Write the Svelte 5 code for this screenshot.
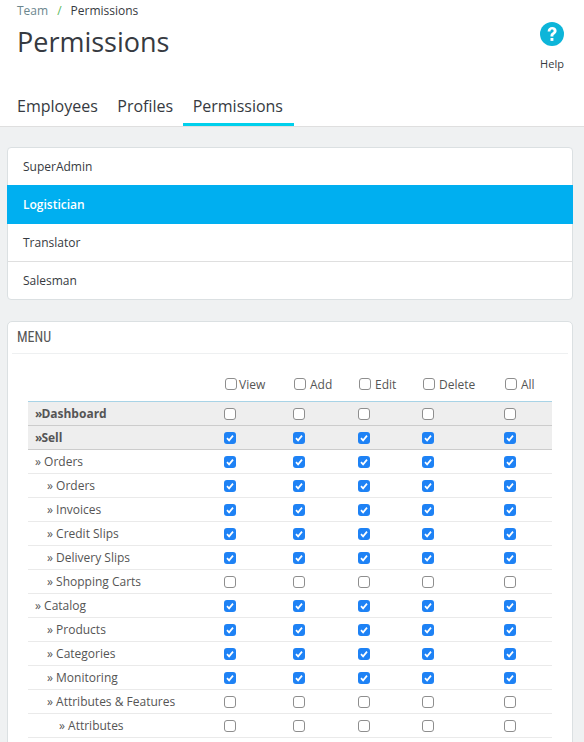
<script>
  const profiles = ['SuperAdmin', 'Logistician', 'Translator', 'Salesman'];
  const columns = ['View', 'Add', 'Edit', 'Delete', 'All'];
  const widths = [196, 69, 65, 64, 82, 48];

  // level 0 = section header, on = all boxes ticked or not
  const rows = [
    { label: 'Dashboard', level: 0, on: false },
    { label: 'Sell', level: 0, on: true },
    { label: 'Orders', level: 1, on: true },
    { label: 'Orders', level: 2, on: true },
    { label: 'Invoices', level: 2, on: true },
    { label: 'Credit Slips', level: 2, on: true },
    { label: 'Delivery Slips', level: 2, on: true },
    { label: 'Shopping Carts', level: 2, on: false },
    { label: 'Catalog', level: 1, on: true },
    { label: 'Products', level: 2, on: true },
    { label: 'Categories', level: 2, on: true },
    { label: 'Monitoring', level: 2, on: true },
    { label: 'Attributes & Features', level: 2, on: false },
    { label: 'Attributes', level: 3, on: false }
  ];
</script>

<header class="head">
  <div class="head-top">
    <div>
      <nav class="crumbs">
        <span class="crumb-link">Team</span>
        <span class="crumb-sep">/</span>
        <span>Permissions</span>
      </nav>
      <h1>Permissions</h1>
    </div>
    <div class="help">
      <svg width="24" height="24" viewBox="0 0 24 24">
        <circle cx="12" cy="12" r="12" fill="#0db5d9" />
        <path d="M7.6 9.4C7.8 6.6 9.6 5 12.2 5c2.6 0 4.4 1.6 4.4 3.8 0 1.7-.9 2.6-2 3.4-.9.6-1.2 1-1.2 1.8v.4h-2.9v-.7c0-1.4.6-2.2 1.7-3 .9-.6 1.4-1.1 1.4-1.8 0-.8-.6-1.3-1.5-1.3-1 0-1.6.6-1.7 1.8z" fill="#fff" />
        <rect x="10.5" y="16" width="2.9" height="2.9" fill="#fff" />
      </svg>
      <span>Help</span>
    </div>
  </div>
  <div class="tabs">
    <span class="tab">Employees</span>
    <span class="tab">Profiles</span>
    <span class="tab active">Permissions</span>
  </div>
</header>

<main class="page">
  <ul class="profiles">
    {#each profiles as name}
      <li class:active={name === 'Logistician'}>{name}</li>
    {/each}
  </ul>

  <section class="card">
    <h2>Menu</h2>
    <table>
      <colgroup>
        {#each widths as w}
          <col style="width: {w}px" />
        {/each}
      </colgroup>
      <thead>
        <tr>
          <th></th>
          {#each columns as col}
            <th><label><input type="checkbox" />{col}</label></th>
          {/each}
        </tr>
      </thead>
      <tbody>
        {#each rows as row}
          <tr class:section={row.level === 0}>
            <td class="name level-{row.level}"><span class="mark">»</span>{row.level === 0 ? '' : ' '}{row.label}</td>
            {#each columns as col}
              <td><input type="checkbox" checked={row.on} /></td>
            {/each}
          </tr>
        {/each}
      </tbody>
    </table>
  </section>
</main>

<style>
  :global(body) {
    background: #eff1f2;
    font-family: "Open Sans", sans-serif;
    color: #363a41;
    overflow: hidden;
  }

  .head {
    background: #fff;
    border-bottom: 1px solid #dfdfdf;
    height: 126px;
  }

  .head-top {
    display: flex;
    justify-content: space-between;
    padding: 0 20px 0 17px;
    height: 91px;
  }

  .crumbs {
    font-size: 12px;
    line-height: 22px;
    display: flex;
    gap: 9px;
    white-space: pre;
  }

  .crumb-link {
    color: #6c868e;
  }

  .crumb-sep {
    color: #5cb85c;
  }

  h1 {
    margin: 1px 0 0;
    font-size: 27px;
    font-weight: 400;
    line-height: 38px;
  }

  .help {
    display: flex;
    flex-direction: column;
    align-items: center;
    padding-top: 22px;
    font-size: 11px;
    gap: 10px;
  }

  .tabs {
    display: flex;
    padding-left: 7px;
    height: 35px;
  }

  .tab {
    padding: 0 10px;
    font-size: 16px;
    line-height: 30px;
  }

  .tab + .tab {
    margin-left: -0.5px;
  }

  .tab.active {
    border-bottom: 3px solid #00d0ec;
    height: 32px;
    padding-right: 11px;
  }

  .page {
    padding: 20px 11px 0 7px;
  }

  .profiles {
    list-style: none;
    margin: 0;
    padding: 0;
    background: #fff;
    border: 1px solid #dbe0e2;
    border-radius: 4px;
  }

  .profiles li {
    height: 37px;
    line-height: 37px;
    padding-left: 15px;
    font-size: 12px;
    border-top: 1px solid #dfdfdf;
  }

  .profiles li:first-child {
    border-top: 0;
  }

  .profiles li.active {
    background: #00aff0;
    color: #fff;
    border-top: 0;
    height: 39px;
    line-height: 39px;
    font-weight: 600;
    margin: 0 -1px;
    padding-left: 16px;
  }

  .profiles li.active + li {
    border-top: 0;
  }

  .card {
    margin-top: 21px;
    background: #fff;
    border: 1px solid #dbe0e2;
    border-radius: 5px;
    padding: 0 7px;
    height: 500px;
  }

  h2 {
    margin: 0 -3px;
    padding-left: 5px;
    font-family: "Roboto Condensed", "DejaVu Sans Condensed", Roboto, sans-serif;
    font-stretch: 75%;
    font-size: 14px;
    font-weight: 400;
    line-height: 31px;
    text-transform: uppercase;
    color: #555;
    border-bottom: 1px solid #eef0f1;
  }

  table {
    table-layout: fixed;
    border-collapse: collapse;
    width: 524px;
    margin: 15px 0 0 13px;
    font-size: 12px;
    color: #555;
  }

  th {
    height: 30px;
    padding: 0 0 2px;
    text-align: left;
    font-weight: 400;
    border-bottom: 1px solid #a8d3e6;
  }

  th label {
    display: flex;
    align-items: center;
    gap: 4px;
    padding-left: 1px;
  }

  th:nth-child(2) label {
    gap: 2px;
  }

  td {
    height: 23px;
    padding: 0;
    border-bottom: 1px solid #eaeaea;
  }

  tr.section td {
    background: #eee;
    border-bottom-color: #ccc;
    font-weight: 700;
  }

  tr.section .mark {
    letter-spacing: -2px;
    margin-right: 1px;
  }

  td.level-0, td.level-1 { padding-left: 7px; }
  td.level-2 { padding-left: 19px; }
  td.level-3 { padding-left: 31px; }

  input {
    appearance: none;
    display: block;
    box-sizing: border-box;
    width: 12px;
    height: 12px;
    margin: 0;
    background: #fff;
    border: 1px solid #8e8e8e;
    border-radius: 3px;
  }

  input:checked {
    border: 0;
    background: #1e82f5 url("data:image/svg+xml,%3Csvg xmlns='http://www.w3.org/2000/svg' viewBox='0 0 12 12'%3E%3Cpath d='M3 6.2l2.1 2.2L9 3.6' fill='none' stroke='%23fff' stroke-width='1.7'/%3E%3C/svg%3E") center / 12px 12px no-repeat;
  }
</style>
